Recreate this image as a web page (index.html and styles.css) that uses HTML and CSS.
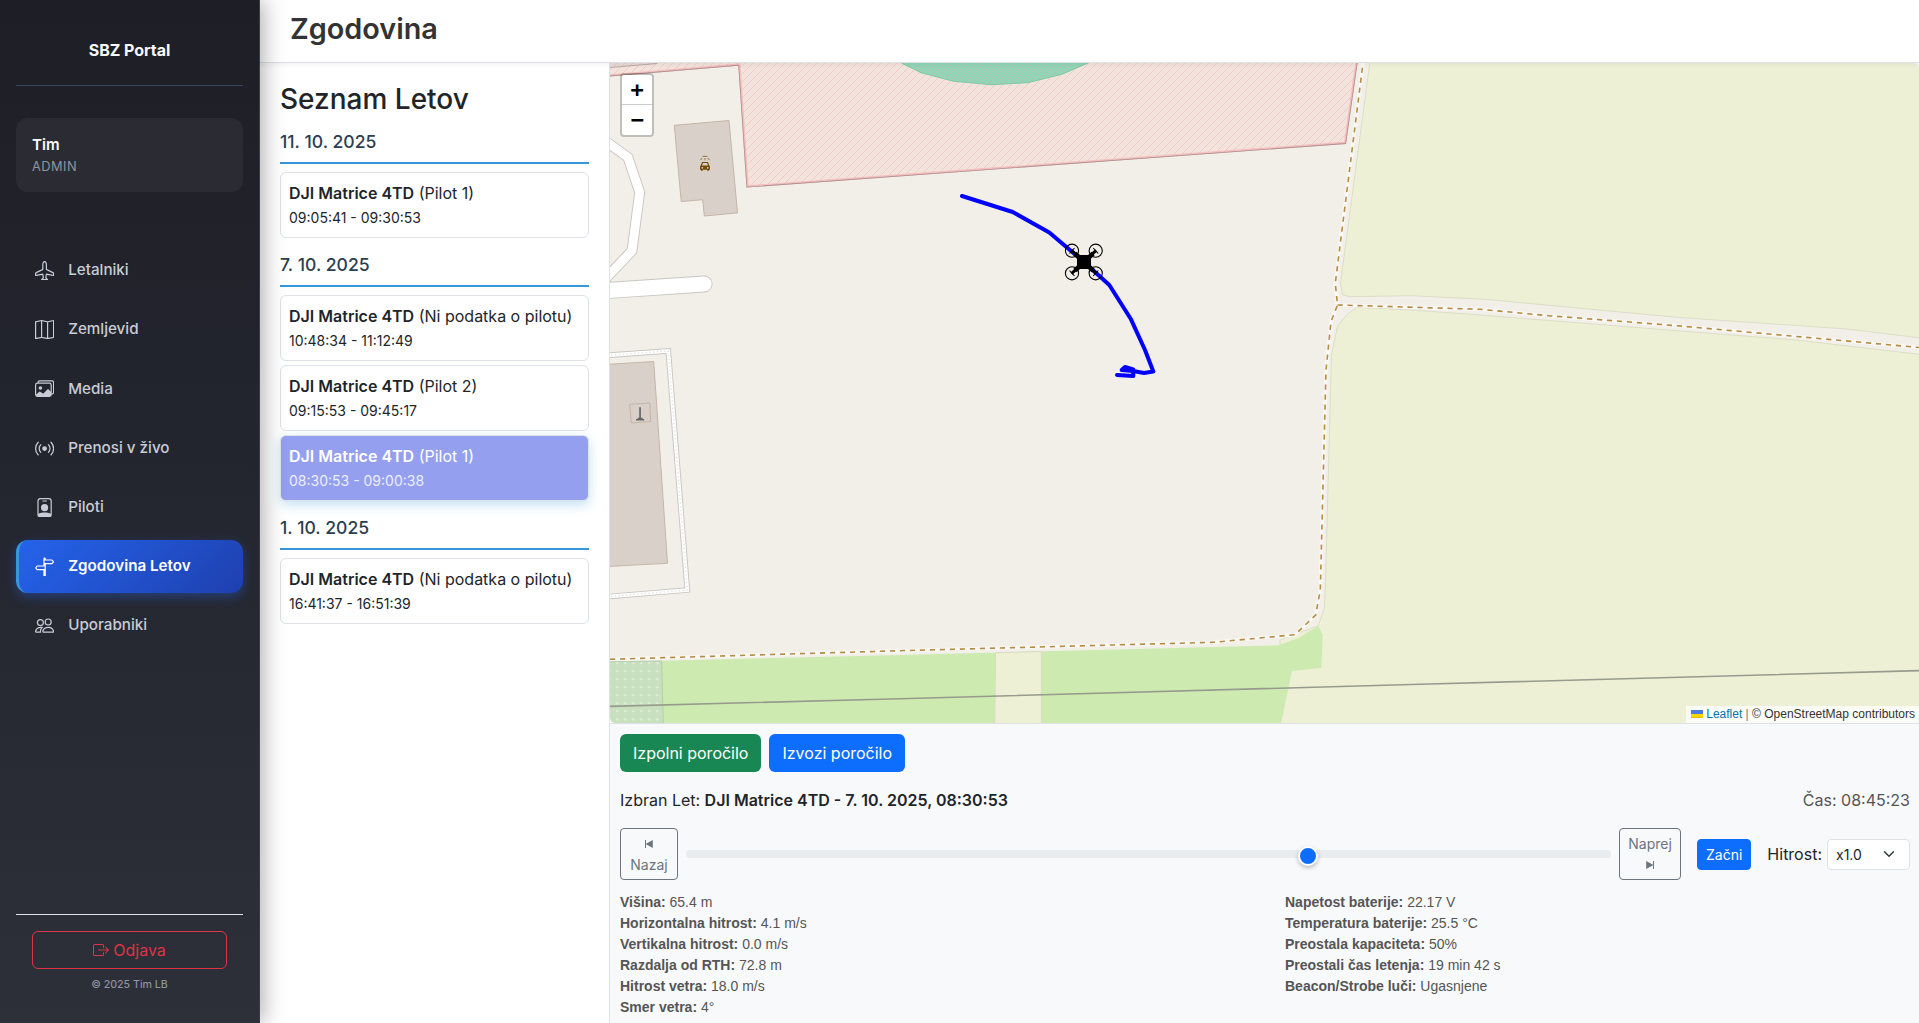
FILE: index.html
```html
<!DOCTYPE html>
<html lang="sl">
<head>
<meta charset="utf-8">
<title>SBZ Portal - Zgodovina</title>
<link rel="stylesheet" href="styles.css">
</head>
<body>
<div class="app">
  <aside class="sidebar">
    <div class="brand">SBZ Portal</div>
    <div class="user-card">
      <div class="user-name">Tim</div>
      <div class="user-role">ADMIN</div>
    </div>
    <nav class="nav">
      <a class="nav-item"><svg class="icon" viewBox="0 0 16 16"><path d="M6.428 1.151C6.708.591 7.213 0 8 0s1.292.592 1.572 1.151C9.861 1.73 10 2.431 10 3v3.691l5.17 2.585a1.5 1.5 0 0 1 .83 1.342V12a.5.5 0 0 1-.582.493l-5.507-.918-.375 2.253 1.318 1.318A.5.5 0 0 1 10.5 16h-5a.5.5 0 0 1-.354-.854l1.319-1.318-.376-2.253-5.507.918A.5.5 0 0 1 0 12v-1.382a1.5 1.5 0 0 1 .83-1.342L6 6.691V3c0-.568.14-1.271.428-1.849m.894.448C7.111 2.02 7 2.569 7 3v4a.5.5 0 0 1-.276.447l-5.448 2.724a.5.5 0 0 0-.276.447v.792l5.418-.903a.5.5 0 0 1 .575.41l.5 3a.5.5 0 0 1-.14.437L6.708 15h2.586l-.647-.646a.5.5 0 0 1-.14-.436l.5-3a.5.5 0 0 1 .576-.411L15 11.41v-.792a.5.5 0 0 0-.276-.447L9.276 7.447A.5.5 0 0 1 9 7V3c0-.432-.11-.979-.322-1.401C8.458 1.159 8.213 1 8 1s-.458.158-.678.599"/></svg><span>Letalniki</span></a>
      <a class="nav-item"><svg class="icon" viewBox="0 0 16 16"><path fill-rule="evenodd" d="M15.817.113A.5.5 0 0 1 16 .5v14a.5.5 0 0 1-.402.49l-5 1a.5.5 0 0 1-.196 0L5.5 15.01l-4.902.98A.5.5 0 0 1 0 15.5v-14a.5.5 0 0 1 .402-.49l5-1a.5.5 0 0 1 .196 0L10.5.99l4.902-.98a.5.5 0 0 1 .415.103M10 1.91l-4-.8v12.98l4 .8zm1 12.98 4-.8V1.11l-4 .8zm-6-.8V1.11l-4 .8v12.98z"/></svg><span>Zemljevid</span></a>
      <a class="nav-item"><svg class="icon" viewBox="0 0 16 16"><path d="M4.502 9a1.5 1.5 0 1 0 0-3 1.5 1.5 0 0 0 0 3"/><path d="M14.002 13a2 2 0 0 1-2 2h-10a2 2 0 0 1-2-2V5A2 2 0 0 1 2 3a2 2 0 0 1 2-2h10a2 2 0 0 1 2 2v8a2 2 0 0 1-1.998 2M14 2H4a1 1 0 0 0-1 1h9.002a2 2 0 0 1 2 2v7A1 1 0 0 0 15 11V3a1 1 0 0 0-1-1M2.002 4a1 1 0 0 0-1 1v8l2.646-2.354a.5.5 0 0 1 .63-.062l2.66 1.773 3.71-3.71a.5.5 0 0 1 .577-.094l1.777 1.947V5a1 1 0 0 0-1-1z" fill-rule="nonzero"/><path d="M1.500 13l2.300-2.200 2.900 1.900 3.900-3.900 2.400 2.500V13.200a1 1 0 0 1-1 1H2.500z"/></svg><span>Media</span></a>
      <a class="nav-item"><svg class="icon" viewBox="0 0 16 16"><path d="M3.05 3.05a7 7 0 0 0 0 9.9.5.5 0 0 1-.707.707 8 8 0 0 1 0-11.314.5.5 0 0 1 .707.707m2.122 2.122a4 4 0 0 0 0 5.656.5.5 0 1 1-.708.708 5 5 0 0 1 0-7.072.5.5 0 0 1 .708.708m5.656-.708a.5.5 0 0 1 .708 0 5 5 0 0 1 0 7.072.5.5 0 1 1-.708-.708 4 4 0 0 0 0-5.656.5.5 0 0 1 0-.708m2.122-2.12a.5.5 0 0 1 .707 0 8 8 0 0 1 0 11.313.5.5 0 0 1-.707-.707 7 7 0 0 0 0-9.9.5.5 0 0 1 0-.707zM10 8a2 2 0 1 1-4 0 2 2 0 0 1 4 0"/></svg><span>Prenosi v živo</span></a>
      <a class="nav-item"><svg class="icon" viewBox="0 0 16 16"><path d="M6.5 2a.5.5 0 0 0 0 1h3a.5.5 0 0 0 0-1zM11 8a3 3 0 1 1-6 0 3 3 0 0 1 6 0"/><path d="M4.500 0A2.500 2.500 0 0 0 2 2.500V14a2 2 0 0 0 2 2h8a2 2 0 0 0 2-2V2.500A2.500 2.500 0 0 0 11.500 0zM3 2.500A1.500 1.500 0 0 1 4.500 1h7A1.500 1.500 0 0 1 13 2.500v10.795a4.200 4.200 0 0 0-.776-.492C11.392 12.387 10.063 12 8 12s-3.392.387-4.224.803a4.200 4.200 0 0 0-.776.492z"/></svg><span>Piloti</span></a>
      <a class="nav-item active"><svg class="icon" viewBox="0 0 16 16"><path d="M7 7V1.414a1 1 0 0 1 2 0V2h5a1 1 0 0 1 .8.4l.975 1.3a.5.5 0 0 1 0 .6L14.8 5.6a1 1 0 0 1-.8.4H9v10H7v-5H2a1 1 0 0 1-.8-.4L.225 9.3a.5.5 0 0 1 0-.6L1.2 7.4A1 1 0 0 1 2 7zm1 3V8H2l-.75 1L2 10zm0-5h6l.75-1L14 3H8z"/></svg><span>Zgodovina Letov</span></a>
      <a class="nav-item"><svg class="icon" viewBox="0 0 16 16"><path d="M15 14s1 0 1-1-1-4-5-4-5 3-5 4 1 1 1 1zm-7.978-1L7 12.996c.001-.264.167-1.03.76-1.72C8.312 10.629 9.282 10 11 10c1.717 0 2.687.63 3.24 1.276.593.69.758 1.457.76 1.72l-.008.002-.014.002zM11 7a2 2 0 1 0 0-4 2 2 0 0 0 0 4m3-2a3 3 0 1 1-6 0 3 3 0 0 1 6 0M6.936 9.28a6 6 0 0 0-1.23-.247A7 7 0 0 0 5 9c-4 0-5 3-5 4q0 1 1 1h4.216A2.24 2.24 0 0 1 5 13c0-1.01.377-2.042 1.09-2.904.243-.294.526-.569.846-.816M4.92 10A5.5 5.5 0 0 0 4 13H1c0-.26.164-1.03.76-1.724.545-.636 1.492-1.256 3.16-1.275ZM1.5 5.5a3 3 0 1 1 6 0 3 3 0 0 1-6 0m3-2a2 2 0 1 0 0 4 2 2 0 0 0 0-4"/></svg><span>Uporabniki</span></a>
    </nav>
    <div class="sidebar-footer">
      <button class="logout"><svg viewBox="0 0 16 16"><path fill-rule="evenodd" d="M10 12.5a.5.5 0 0 1-.5.5h-8a.5.5 0 0 1-.5-.5v-9a.5.5 0 0 1 .5-.5h8a.5.5 0 0 1 .5.5v2a.5.5 0 0 0 1 0v-2A1.5 1.5 0 0 0 9.500 2h-8A1.500 1.500 0 0 0 0 3.500v9A1.500 1.500 0 0 0 1.500 14h8a1.500 1.500 0 0 0 1.500-1.500v-2a.5.5 0 0 0-1 0z"/><path fill-rule="evenodd" d="M15.854 8.354a.5.5 0 0 0 0-.708l-3-3a.5.5 0 0 0-.708.708L14.293 7.500H5.500a.5.5 0 0 0 0 1h8.793l-2.147 2.146a.5.5 0 0 0 .708.708z"/></svg><span>Odjava</span></button>
      <div class="copyright">© 2025 Tim LB</div>
    </div>
  </aside>

  <main class="main">
    <header class="topbar"><h1>Zgodovina</h1></header>
    <div class="content">
      <section class="flights">
        <h3>Seznam Letov</h3>
        <h5>11. 10. 2025</h5>
        <div class="flight"><div><b>DJI Matrice 4TD</b> (Pilot 1)</div><div class="time">09:05:41 - 09:30:53</div></div>
        <h5>7. 10. 2025</h5>
        <div class="flight"><div><b>DJI Matrice 4TD</b> (Ni podatka o pilotu)</div><div class="time">10:48:34 - 11:12:49</div></div>
        <div class="flight"><div><b>DJI Matrice 4TD</b> (Pilot 2)</div><div class="time">09:15:53 - 09:45:17</div></div>
        <div class="flight selected"><div><b>DJI Matrice 4TD</b> (Pilot 1)</div><div class="time">08:30:53 - 09:00:38</div></div>
        <h5>1. 10. 2025</h5>
        <div class="flight"><div><b>DJI Matrice 4TD</b> (Ni podatka o pilotu)</div><div class="time">16:41:37 - 16:51:39</div></div>
      </section>

      <section class="detail">
        <div class="map">
          <svg class="map-canvas" viewBox="610 63 1309 660" preserveAspectRatio="none">
            <defs>
              <pattern id="hatch" width="8" height="8" patternUnits="userSpaceOnUse">
                <path d="M-2 2L2 -2M0 8L8 0M6 10L10 6" stroke="#f3a0a0" stroke-opacity=".36" stroke-width="1" fill="none"/>
              </pattern>
              <pattern id="plots" x="613.3" y="659.3" width="8" height="8" patternUnits="userSpaceOnUse">
                <path d="M4 2.8v2.4M2.800 4h2.400" stroke="#eef6ea" stroke-width=".8"/>
              </pattern>
              <clipPath id="zoneClip"><path d="M600 77.300L738.300 65.700L746.500 187.600L1346 143.900L1358 60V50H600Z"/></clipPath>
            </defs>
            <rect x="610" y="63" width="1309" height="660" fill="#f2efe9"/>
            <!-- restricted zone -->
            <path d="M600 77.300L738.300 65.700L746.500 187.600L1346 143.900L1358 60V50H600Z" fill="#f2e3dc"/>
            <path d="M610 67.500L657 63.500V50H600Z" fill="#e6dad6" stroke="#b9a9a5" stroke-width="1"/>
            <path d="M901.300 63L921 72.700L953.600 81.300L991.500 84.700L1027.700 82.700L1062 74.300L1088.600 62.700V50H901Z" fill="#91d5b6" stroke="#7ccaa5" stroke-width="1"/>
            <g clip-path="url(#zoneClip)">
              <rect x="600" y="50" width="760" height="140" fill="url(#hatch)"/>
              <path d="M600 77.300L738.300 65.700L746.500 187.600L1346 143.900L1358 60" fill="none" stroke="#f6b8b8" stroke-opacity=".85" stroke-width="4.600"/>
              <path d="M600 77.300L738.300 65.700L746.500 187.600L1346 143.900L1358 60" fill="none" stroke="#ad9391" stroke-width="1.700"/>
            </g>
            <!-- farmland -->
            <g fill="#edf0d5" stroke="#dcdec6" stroke-width="1">
              <path d="M1371.500 50L1340.500 283.300L1342.600 295L1350 296.700L1412 295.700L1484.700 299.300L1676.700 317.300L1847 329L1925 338.500V50Z"/>
              <path d="M1925 355L1796 340L1676.700 330.700L1480 315L1416.400 310.300L1356.700 307.300L1347.300 314.300L1337.500 326L1331.500 355L1325.300 590L1324.300 609L1318.300 625.700L1280 640V730H1925Z"/>
            </g>
            <!-- grass -->
            <path d="M610 661.700L661.700 660.700L900 655L1278.300 645.300L1298.300 638.300L1318.300 626L1322.700 635L1321.300 668L1292 671L1281 723.500H610Z" fill="#cdebb0"/>
            <path d="M995.500 652.700L1041.300 651.500V730H994.700Z" fill="#edf0d5" stroke="#d9dcc0" stroke-width="1"/>
            <path d="M600 662L661.700 661L663.500 730H600Z" fill="#c8e0be" stroke="#b5cfae" stroke-width="1"/>
            <path d="M600 662L661.700 661L663.500 730H600Z" fill="url(#plots)"/>
            <!-- footpaths -->
            <g fill="none">
              <path d="M600 659.600L900 650.700L1213.300 642.300L1295 634.700L1315.700 615L1320.300 590L1326 370L1331 321.700L1337.500 305L1335.300 283.300L1363 63V50M1337.500 305L1480.400 309.300L1548.700 315.700L1676.700 325.700L1925 348" stroke="#faf8f5" stroke-width="3.500"/>
              <path d="M600 659.600L900 650.700L1213.300 642.300L1295 634.700L1315.700 615L1320.300 590L1326 370L1331 321.700L1337.500 305L1335.300 283.300L1363 63V50" stroke="#b58c40" stroke-width="1.600" stroke-dasharray="5.200 4.800"/>
              <path d="M1337.500 305L1480.400 309.300L1548.700 315.700L1676.700 325.700L1925 348" stroke="#b58c40" stroke-width="1.600" stroke-dasharray="5.200 4.800"/>
            </g>
            <path d="M600 706.600L900 698.700L1420 684.300L1925 670.500" stroke="#979b8e" stroke-width="1.600" fill="none"/>
            <!-- roads -->
            <g fill="none" stroke-linecap="round">
              <g stroke="#c8c6c2">
                <path d="M600 137L628 157.500L639.700 192.300L632 250.700L600 284.500" stroke-width="10.800"/>
                <path d="M600 291L704 284" stroke-width="17"/>
                <path d="M600 355.800L668.300 351L687.300 590L600 597.300" stroke-width="5.600"/>
              </g>
              <g stroke="#fff">
                <path d="M600 137L628 157.500L639.700 192.300L632 250.700L600 284.500" stroke-width="8.900"/>
                <path d="M600 291L704 284" stroke-width="15.200"/>
                <path d="M600 355.800L668.300 351L687.300 590L600 597.300" stroke-width="3.700"/>
              </g>
              <path d="M600 355.800L668.300 351L687.300 590L600 597.300" stroke="#dededc" stroke-width="1.300" stroke-dasharray="1.200 2.600" stroke-linecap="butt"/>
            </g>
            <!-- buildings -->
            <g fill="#d9d0c9" stroke="#c6b5a6" stroke-width="1">
              <path d="M674.300 125.300L729 120.500L737.500 212.900L704.300 216L702.700 199.700L681.200 201.500Z"/>
              <path d="M600 364.800L653.700 361.500L667.500 563.300L600 566.900Z"/>
              <path d="M629.700 404.300L649.700 403L650.700 421.500L631.300 423Z"/>
            </g>
            <path d="M639.200 407.300h1.700v10.400h1.700v1.200h1.600v1.600h-8.200v-1.600h1.600v-1.200h1.600z" fill="#666"/>
            <!-- car wash -->
            <g fill="#734a08" stroke="none">
              <path d="M702 162h6l1.300 3.600q.7.400.7 1.400v2.800h-1v1h-1.800v-1h-4.400v1H701v-1h-1V167q0-1 .7-1.400zM702.900 163l-.9 2.500h6l-.9-2.500zM702.300 167a.8.8 0 1 0 .01 0zM707.700 167a.8.8 0 1 0 .01 0z" fill-rule="evenodd"/>
              <path d="M702.500 156.400h5M702.200 158l-1.800 2.200M705 158.200v2.200M707.800 158l1.800 2.200" stroke="#8f6a33" stroke-width=".9" fill="none"/>
            </g>
            <!-- flight track -->
            <path d="M962 196L1012.700 212L1049.300 232.500L1084 262L1109.300 285L1131 319.300L1145 350L1153.300 371.500L1144 373L1133 371L1121.700 370L1125 367L1133.300 369.500L1133.300 376L1117 375" fill="none" stroke="#00f" stroke-width="4" stroke-linecap="round" stroke-linejoin="round"/>
            <!-- drone marker -->
            <g stroke="#000" fill="none">
              <g stroke-width="1.100">
                <circle cx="1072" cy="250.700" r="6.600"/><circle cx="1095.700" cy="250.700" r="6.600"/>
                <circle cx="1072" cy="273.300" r="6.600"/><circle cx="1095.700" cy="273.300" r="6.600"/>
                <path d="M1069.500 253.500l5-5.500M1093.200 248l5 5.500M1069.500 270.500l5 5.500M1093.200 276l5-5.500"/>
              </g>
              <path d="M1071.500 250.300L1096.200 273.700M1096.200 250.300L1071.500 273.700" stroke-width="3"/>
              <path d="M1075 253.500L1093 270.500M1093 253.500L1075 270.500" stroke-width="4.600"/>
              <rect x="1077.500" y="255.500" width="13" height="13" rx="1.500" fill="#000"/>
            </g>
          </svg>
          <div class="zoom"><a>+</a><a>−</a></div>
          <div class="attribution"><svg width="12" height="8" viewBox="0 0 12 8"><path fill="#4C7BE1" d="M0 0h12v4H0z"/><path fill="#FFD500" d="M0 4h12v3H0z"/><path fill="#E0BC00" d="M0 7h12v1H0z"/></svg> <a>Leaflet</a> <i>|</i> © OpenStreetMap contributors</div>
        </div>

        <div class="panel">
          <div class="actions">
            <button class="btn green">Izpolni poročilo</button>
            <button class="btn blue">Izvozi poročilo</button>
          </div>
          <div class="summary">
            <div>Izbran Let: <b>DJI Matrice 4TD - 7. 10. 2025, 08:30:53</b></div>
            <div class="clock">Čas: 08:45:23</div>
          </div>
          <div class="player">
            <button class="step back"><svg width="10" height="10" viewBox="0 0 10 10"><path d="M1 1h1v3.700L8.800 1v8L2 5.300V9H1z"/></svg><span>Nazaj</span></button>
            <div class="slider"><div class="thumb" style="left:67.2%"></div></div>
            <button class="step forward"><span>Naprej</span><svg width="10" height="10" viewBox="0 0 10 10"><path d="M9 1H8v3.700L1.200 1v8L8 5.300V9h1z"/></svg></button>
            <button class="play">Začni</button>
            <label class="speed">Hitrost: <span class="select">x1.0<svg width="12" height="12" viewBox="0 0 16 16"><path d="m2 5 6 6 6-6" fill="none" stroke="#343a40" stroke-width="2" stroke-linecap="round" stroke-linejoin="round"/></svg></span></label>
          </div>
          <div class="telemetry">
            <div>
              <p><b>Višina:</b> 65.4 m</p>
              <p><b>Horizontalna hitrost:</b> 4.1 m/s</p>
              <p><b>Vertikalna hitrost:</b> 0.0 m/s</p>
              <p><b>Razdalja od RTH:</b> 72.8 m</p>
              <p><b>Hitrost vetra:</b> 18.0 m/s</p>
              <p><b>Smer vetra:</b> 4°</p>
            </div>
            <div>
              <p><b>Napetost baterije:</b> 22.17 V</p>
              <p><b>Temperatura baterije:</b> 25.5 °C</p>
              <p><b>Preostala kapaciteta:</b> 50%</p>
              <p><b>Preostali čas letenja:</b> 19 min 42 s</p>
              <p><b>Beacon/Strobe luči:</b> Ugasnjene</p>
            </div>
          </div>
        </div>
      </section>
    </div>
  </main>
</div>
</body>
</html>
```

FILE: styles.css
```css
* { box-sizing: border-box; }
body {
  margin: 0;
  font-family: Inter, "Liberation Sans", sans-serif;
  font-size: 16px;
  line-height: 1.5;
  color: #212529;
  background: #fff;
}
h1, h3, h5, p { margin: 0; }
button { font-family: inherit; cursor: pointer; }
.app { display: flex; height: 1023px; overflow: hidden; }

/* Sidebar */
.sidebar {
  position: relative;
  z-index: 2;
  flex: none;
  width: 260px;
  display: flex;
  flex-direction: column;
  padding: 0 16px;
  background: linear-gradient(180deg, #1e1e26 0%, #23252e 42%, #2d2f39 100%);
  border-right: 1px solid #3b3b45;
  box-shadow: 4px 0 20px rgba(0, 0, 0, .3);
}
.brand {
  height: 86px;
  padding-top: 38px;
  text-align: center;
  font-weight: 700;
  font-size: 16px;
  letter-spacing: -.05px;
  color: #f8f9fa;
  border-bottom: 1px solid #34435e;
}
.user-card {
  height: 74px;
  margin-top: 32px;
  padding: 15px 16px;
  border-radius: 12px;
  background: rgba(255, 255, 255, .05);
}
.user-name { font-weight: 600; font-size: 15.2px; line-height: 23px; color: #f8f9fa; }
.user-role { margin-top: 1px; font-size: 12.8px; line-height: 20px; letter-spacing: .5px; color: #8f94a3; }
.nav { display: flex; flex-direction: column; gap: 6.4px; margin-top: 52.3px; }
.nav-item {
  display: flex;
  align-items: center;
  gap: 14px;
  height: 52.8px;
  padding-left: 16px;
  border-left: 3px solid transparent;
  border-radius: 12px;
  font-size: 15.2px;
  font-weight: 500;
  color: #c9ccd6;
}
.nav-item.active {
  color: #fff;
  font-weight: 600;
  border-left-color: #3498db;
  background: linear-gradient(135deg, #2563eb, #1e40af);
  box-shadow: 0 4px 12px rgba(37, 99, 235, .4);
}
.icon { width: 19.2px; height: 19.2px; fill: currentColor; }
.sidebar-footer {
  margin-top: auto;
  height: 109px;
  padding: 16px 16px 0;
  border-top: 1px solid #dee2e6;
}
.logout {
  display: flex;
  align-items: center;
  justify-content: center;
  gap: 4px;
  width: 100%;
  height: 38px;
  border: 1px solid #dc3545;
  border-radius: 6px;
  background: none;
  color: #dc3545;
  font-size: 16px;
}
.logout svg { width: 16px; height: 16px; fill: currentColor; }
.copyright { margin-top: 7px; text-align: center; font-size: 10.6px; font-weight: 500; line-height: 17px; color: #8d93a1; }

/* Main area */
.main { flex: 1; min-width: 0; display: flex; flex-direction: column; }
.topbar {
  position: relative;
  z-index: 1;
  height: 63px;
  padding: 7px 30px 0;
  background: #fff;
  border-bottom: 1px solid #dee2e6;
  box-shadow: 0 2px 4px rgba(0, 0, 0, .05);
}
.topbar h1 { font-size: 28.8px; line-height: 44px; font-weight: 600; color: #333; }
.content { flex: 1; display: flex; min-height: 0; }

/* Flight list */
.flights { flex: none; width: 350px; padding: 19px 20px; border-right: 1px solid #dee2e6; }
.flights h3 { font-size: 28px; line-height: 34px; font-weight: 500; margin-bottom: 15px; }
.flights h5 {
  height: 33px;
  margin-bottom: 8px;
  font-size: 17.6px;
  line-height: 22px;
  font-weight: 500;
  color: #2c3e50;
  border-bottom: 2px solid #3498db;
}
.flight + h5 { margin-top: 16px; }
.flight {
  height: 66px;
  padding: 8px;
  border: 1px solid #dee2e6;
  border-radius: 6px;
  white-space: nowrap;
}
.flight + .flight { margin-top: 4px; }
.flight b { font-weight: 600; }
.flight .time { font-size: 14px; line-height: 26px; }
.flight.selected {
  color: #fff;
  background: #959fef;
  box-shadow: 0 4px 12px rgba(52, 152, 219, .3);
}
.flight.selected .time { color: #eceefc; }

/* Map */
.detail { flex: 1; min-width: 0; display: flex; flex-direction: column; background: #f8f9fb; }
.map { position: relative; height: 660px; overflow: hidden; border-radius: 0 6px 6px 6px; }
.map-canvas { display: block; width: 100%; height: 100%; }
.zoom {
  position: absolute;
  left: 10px;
  top: 10px;
  width: 34px;
  border: 2px solid rgba(0, 0, 0, .2);
  border-radius: 4px;
  background: #fff;
  background-clip: padding-box;
}
.zoom a {
  display: block;
  height: 30px;
  text-align: center;
  font: bold 22px/30px "DejaVu Sans Mono", monospace;
  color: #000;
}
.zoom a:first-child { border-bottom: 1px solid #ccc; line-height: 29px; }
.attribution {
  position: absolute;
  right: 0;
  bottom: 0;
  padding: 0 4px 0 5px;
  font: 12px/17px "Liberation Sans", Arial, sans-serif;
  color: #333;
  white-space: nowrap;
  background: rgba(255, 255, 255, .8);
}
.attribution a { color: #0078a8; }
.attribution i { font-style: normal; color: #777; }

/* Playback panel */
.panel { flex: 1; padding: 10px 9px 0 10px; border-top: 1px solid #dee2e6; }
.actions { display: flex; gap: 8px; }
.btn { height: 38px; padding: 0 12px; border: 1px solid transparent; border-radius: 6px; font-size: 16px; color: #fff; }
.green { background: #198754; }
.blue { background: #0d6efd; }
.summary { display: flex; justify-content: space-between; margin-top: 16px; }
.summary b { font-weight: 600; }
.clock { color: #555; }
.player { display: flex; align-items: center; height: 52px; margin-top: 16px; }
.step {
  display: flex;
  flex-direction: column;
  align-items: center;
  height: 52px;
  padding: 4px 0;
  border: 1px solid #6c757d;
  border-radius: 4px;
  background: none;
  font-size: 14px;
  line-height: 21px;
  color: #6c757d;
}
.step.back { width: 58px; }
.step.forward { width: 62px; }
.step svg { margin: 5.500px 0; fill: currentColor; }
.slider { position: relative; flex: 1; height: 8px; margin: 0 8px; border-radius: 4px; background: #e9ecef; }
.thumb {
  position: absolute;
  top: -4px;
  width: 20px;
  height: 20px;
  margin-left: -10px;
  border: 2px solid #fff;
  border-radius: 50%;
  background: #0d6efd;
  box-shadow: 0 2px 4px rgba(0, 0, 0, .25);
}
.play {
  height: 31px;
  margin-left: 16px;
  padding: 0 8px;
  border: 1px solid #0d6efd;
  border-radius: 4px;
  background: #0d6efd;
  color: #fff;
  font-size: 14px;
}
.speed { display: flex; align-items: center; gap: 5px; margin-left: 16px; }
.select {
  display: flex;
  align-items: center;
  justify-content: space-between;
  width: 83px;
  height: 31px;
  padding: 0 14px 0 8px;
  border: 1px solid #dee2e6;
  border-radius: 4px;
  background: #fff;
  font-size: 14px;
}
.telemetry {
  display: grid;
  grid-template-columns: 1fr 1fr;
  column-gap: 40px;
  margin-top: 12px;
  font: 14px/21px "Liberation Sans", Arial, sans-serif;
  color: #555;
}
```
